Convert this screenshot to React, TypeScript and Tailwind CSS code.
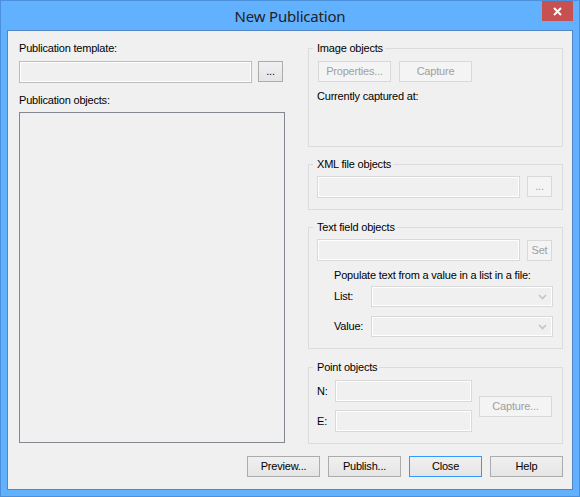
import React from "react";

const ui = "font-['Liberation_Sans',Arial,sans-serif] text-[11px] leading-[13px] tracking-[-0.2px] text-black";

// base button styles without width/border colour so callers can pick them
const btnBase = "h-[21px] border flex items-center justify-center";
const btnOn = `${btnBase} border-[#acacac] bg-gradient-to-b from-[#f0f0f0] to-[#e5e5e5] text-black`;
const btnOff = `${btnBase} border-[#d9d9d9] bg-[#f4f4f4] text-[#a0a0a0]`;
const boxOff = "border border-[#d9d9d9] bg-[#f0f0f0] shadow-[inset_0_0_0_1px_#ffffff]";

function Group({ title, className, children }: { title: string; className: string; children: React.ReactNode }) {
  return (
    <fieldset className={`border border-[#dcdcdc] p-0 m-0 min-w-0 ${className}`}>
      <legend className="ml-[4px] pl-[4px] pr-[2px] leading-[13px]">{title}</legend>
      <div className="px-[8px]">{children}</div>
    </fieldset>
  );
}

function Combo() {
  return (
    <div className={`${boxOff} h-[21px] w-[182px] flex items-center justify-end pr-[5px]`}>
      <svg width="9" height="6" viewBox="0 0 9 6">
        <path d="M1 1 L4.5 4.5 L8 1" fill="none" stroke="#c4c4c4" strokeWidth="1.6" />
      </svg>
    </div>
  );
}

export default function App() {
  return (
    <div className="w-[580px] h-[497px] bg-[#62b1fe] border border-[#4a90da] flex flex-col relative">
      {/* title bar */}
      <div className="h-[29px] flex items-center justify-center pt-[2px]">
        <span className="font-['Noto_Sans',sans-serif] text-[15px] text-[#222] tracking-[-0.2px]">New Publication</span>
      </div>
      <div className="absolute top-0 right-[6px] w-[31px] h-[20px] bg-[#c75050] flex items-center justify-center">
        <svg width="9" height="9" viewBox="0 0 9 9">
          <path d="M1 1 L8 8 M8 1 L1 8" stroke="#ffffff" strokeWidth="2" />
        </svg>
      </div>

      {/* client area */}
      <div className={`ml-[6px] w-[566px] h-[460px] border border-[#5585c2] bg-[#f0f0f0] pt-[11px] pl-[11px] pr-[9px] pb-[12px] flex flex-col ${ui}`}>
        <div className="flex gap-[23px] h-[402px]">
          {/* left column */}
          <div className="w-[266px] flex flex-col">
            <div>Publication template:</div>
            <div className="flex gap-[6px] mt-[6px] items-start">
              <div className="w-[233px] h-[22px] border border-[#bcbcbc] bg-[#f0f0f0] shadow-[inset_0_0_0_1px_#ffffff]" />
              <div className={`${btnOn} w-[25px]`}>...</div>
            </div>
            <div className="mt-[11px]">Publication objects:</div>
            <div className="mt-[5px] h-[331px] border border-[#828790] bg-[#f0f0f0]" />
          </div>

          {/* right column */}
          <div className="w-[255px] flex flex-col">
            <Group title="Image objects" className="h-[105px]">
              <div className="flex gap-[8px] mt-[6px] pl-[1px]">
                <div className={`${btnOff} w-[73px]`}>Properties...</div>
                <div className={`${btnOff} w-[73px]`}>Capture</div>
              </div>
              <div className="mt-[8px]">Currently captured at:</div>
            </Group>

            <Group title="XML file objects" className="h-[52px] mt-[11px]">
              <div className="flex gap-[7px] mt-[5px] items-start">
                <div className={`${boxOff} h-[22px] w-[203px]`} />
                <div className={`${btnOff} w-[25px]`}>...</div>
              </div>
            </Group>

            <Group title="Text field objects" className="h-[128px] mt-[11px]">
              <div className="flex gap-[7px] mt-[5px] items-start">
                <div className={`${boxOff} h-[22px] w-[203px]`} />
                <div className={`${btnOff} w-[25px] mt-[1px]`}>Set</div>
              </div>
              <div className="pl-[17px]">
                <div className="mt-[8px]">Populate text from a value in a list in a file:</div>
                <div className="flex items-center mt-[4px]">
                  <span className="w-[37px]">List:</span>
                  <Combo />
                </div>
                <div className="flex items-center mt-[9px]">
                  <span className="w-[37px]">Value:</span>
                  <Combo />
                </div>
              </div>
            </Group>

            <Group title="Point objects" className="h-[83px] mt-[12px]">
              <div className="flex items-center gap-[7px] mt-[6px]">
                <div className="flex flex-col gap-[8px]">
                  <div className="flex items-center">
                    <span className="w-[18px]">N:</span>
                    <div className={`${boxOff} h-[22px] w-[137px]`} />
                  </div>
                  <div className="flex items-center">
                    <span className="w-[18px]">E:</span>
                    <div className={`${boxOff} h-[22px] w-[137px]`} />
                  </div>
                </div>
                <div className={`${btnOff} w-[73px]`}>Capture...</div>
              </div>
            </Group>
          </div>
        </div>

        {/* bottom buttons */}
        <div className="mt-[12px] flex justify-end gap-[8px]">
          <div className={`${btnOn} w-[73px]`}>Preview...</div>
          <div className={`${btnOn} w-[73px]`}>Publish...</div>
          <div className={`${btnBase} w-[73px] border-[#3399ff] bg-gradient-to-b from-[#f0f0f0] to-[#e5e5e5] text-black`}>Close</div>
          <div className={`${btnOn} w-[73px]`}>Help</div>
        </div>
      </div>
    </div>
  );
}
